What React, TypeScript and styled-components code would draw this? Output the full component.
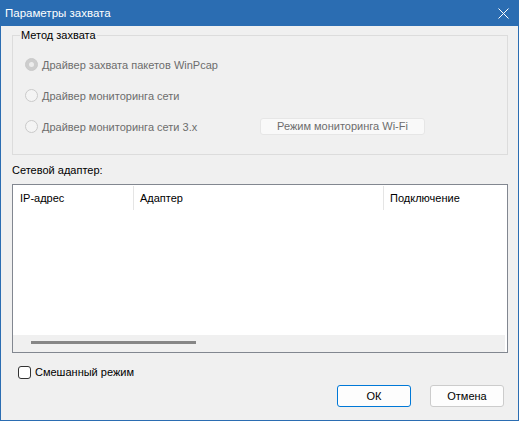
import React from 'react';
import styled, { createGlobalStyle } from 'styled-components';

const font = `"Liberation Sans", Arial, sans-serif`;

const GlobalStyle = createGlobalStyle`
  html, body {
    margin: 0;
    padding: 0;
    background: #f0f0f0;
  }
  * {
    box-sizing: border-box;
  }
`;

const Window = styled.div`
  width: 519px;
  height: 421px;
  display: flex;
  flex-direction: column;
  background: #f0f0f0;
  font: 11px/16px ${font};
  color: #000;
`;

const TitleBar = styled.div`
  height: 26px;
  flex: none;
  display: flex;
  align-items: center;
  justify-content: space-between;
  padding: 0 10px 0 5px;
  background: #2b6db2;
  color: #fff;
  font: 11.5px/16px ${font};
`;

const CloseIcon = styled.svg`
  width: 11px;
  height: 11px;
  display: block;
`;

const Body = styled.div`
  flex: 1;
  display: flex;
  flex-direction: column;
  padding: 0 10px 0 11px;
  border: 1px solid #2b6db2;
  border-top: none;
`;

const Group = styled.fieldset`
  margin: 1px 0 0;
  padding: 0 0 12px 7px;
  border: 1px solid #dcdcdc;
  min-width: 0;
`;

const Legend = styled.legend`
  padding: 0 1px;
  line-height: 16px;
  color: #000;
`;

const Options = styled.div`
  display: flex;
  flex-direction: column;
  padding: 6px 0 0 5px;
`;

const OptionRow = styled.div`
  height: 31px;
  display: grid;
  grid-template-columns: 235px auto;
  align-items: center;
`;

const RadioLabel = styled.label`
  display: flex;
  align-items: center;
  gap: 4px;
  color: #6d6d6d;
`;

const RadioDot = styled.span<{ $checked?: boolean }>`
  width: 13px;
  height: 13px;
  border-radius: 50%;
  border: 1px solid #cacaca;
  background: ${(p) => (p.$checked ? '#cdcdcd' : '#f4f4f4')};
  display: flex;
  align-items: center;
  justify-content: center;

  &::after {
    content: '';
    width: 5px;
    height: 5px;
    border-radius: 50%;
    background: ${(p) => (p.$checked ? '#ececec' : 'transparent')};
  }
`;

const DisabledButton = styled.button`
  width: 165px;
  height: 17px;
  padding: 0;
  border: 1px solid #e6e6e6;
  border-radius: 3px;
  background: #f9f9f9;
  color: #6d6d6d;
  font: 11px/15px ${font};
`;

const SectionLabel = styled.div`
  margin-top: 7px;
`;

const ListBox = styled.div`
  margin-top: 6px;
  height: 169px;
  display: flex;
  flex-direction: column;
  border: 1px solid #828790;
  background: #fff;
`;

const HeaderRow = styled.div`
  display: grid;
  grid-template-columns: 120px 250px 1fr;
  height: 25px;
`;

const HeaderCell = styled.div<{ $divider?: boolean }>`
  display: flex;
  align-items: center;
  padding-left: ${(p) => (p.$divider ? '6px' : '7px')};
  border-left: ${(p) => (p.$divider ? '1px solid #e5e5e5' : 'none')};
  margin-top: 1px;
`;

const ListContent = styled.div`
  flex: 1;
`;

const HScroll = styled.div`
  height: 17px;
  flex: none;
  background: #f0f0f0;
  margin-right: 2px;
  padding: 6px 0 0 18px;
`;

const ScrollThumb = styled.div`
  width: 165px;
  height: 3px;
  background: #868686;
`;

const CheckRow = styled.label`
  margin-top: 11px;
  padding-left: 6px;
  display: flex;
  align-items: center;
  gap: 4px;
  height: 16px;
`;

const CheckBox = styled.span`
  width: 13px;
  height: 13px;
  border: 1px solid #333;
  border-radius: 3px;
  background: #fff;
`;

const ButtonRow = styled.div`
  margin-top: 5px;
  display: flex;
  justify-content: flex-end;
  gap: 19px;
  padding-right: 4px;
`;

const DialogButton = styled.button<{ $default?: boolean }>`
  width: 74px;
  height: 22px;
  padding: 0;
  border: 1px solid ${(p) => (p.$default ? '#0078d7' : '#cccccc')};
  border-radius: 3px;
  background: #fdfdfd;
  color: #000;
  font: 11px/16px ${font};
`;

export default function App() {
  return (
    <>
      <GlobalStyle />
      <Window>
        <TitleBar>
          <span>Параметры захвата</span>
          <CloseIcon viewBox="0 0 11 11">
            <path d="M0.5 0.5 L10.5 10.5 M10.5 0.5 L0.5 10.5" stroke="#fff" strokeWidth="1" />
          </CloseIcon>
        </TitleBar>
        <Body>
          <Group>
            <Legend>Метод захвата</Legend>
            <Options>
              <OptionRow>
                <RadioLabel>
                  <RadioDot $checked />
                  Драйвер захвата пакетов WinPcap
                </RadioLabel>
              </OptionRow>
              <OptionRow>
                <RadioLabel>
                  <RadioDot />
                  Драйвер мониторинга сети
                </RadioLabel>
              </OptionRow>
              <OptionRow>
                <RadioLabel>
                  <RadioDot />
                  Драйвер мониторинга сети 3.x
                </RadioLabel>
                <DisabledButton disabled>Режим мониторинга Wi-Fi</DisabledButton>
              </OptionRow>
            </Options>
          </Group>
          <SectionLabel>Сетевой адаптер:</SectionLabel>
          <ListBox>
            <HeaderRow>
              <HeaderCell>IP-адрес</HeaderCell>
              <HeaderCell $divider>Адаптер</HeaderCell>
              <HeaderCell $divider>Подключение</HeaderCell>
            </HeaderRow>
            <ListContent />
            <HScroll>
              <ScrollThumb />
            </HScroll>
          </ListBox>
          <CheckRow>
            <CheckBox />
            Смешанный режим
          </CheckRow>
          <ButtonRow>
            <DialogButton $default>ОК</DialogButton>
            <DialogButton>Отмена</DialogButton>
          </ButtonRow>
        </Body>
      </Window>
    </>
  );
}
